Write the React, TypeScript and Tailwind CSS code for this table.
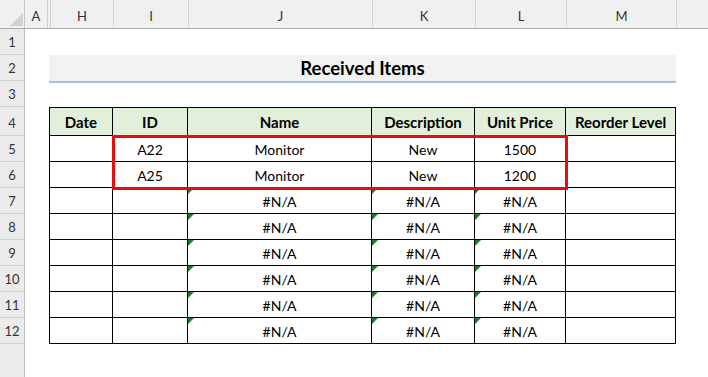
import React from "react";

const rowHeights = [26, 26, 26, 29, 26, 26, 26, 26, 26, 26, 26, 26];

const headerCols: { label: string; w: string }[] = [
  { label: "H", w: "w-[63px]" },
  { label: "I", w: "w-[75px]" },
  { label: "J", w: "w-[184px]" },
  { label: "K", w: "w-[103px]" },
  { label: "L", w: "w-[91px]" },
  { label: "M", w: "w-[110px]" },
];

const tableHead = ["Date", "ID", "Name", "Description", "Unit Price", "Reorder Level"];

type Row = { cells: string[]; tri: boolean };
const rows: Row[] = [
  { cells: ["", "A22", "Monitor", "New", "1500", ""], tri: false },
  { cells: ["", "A25", "Monitor", "New", "1200", ""], tri: false },
  ...Array.from({ length: 6 }, () => ({ cells: ["", "", "#N/A", "#N/A", "#N/A", ""], tri: true })),
];

function Tri() {
  return (
    <span className="absolute left-0 top-0 w-0 h-0 border-t-[6px] border-t-[#1e7a2e] border-r-[6px] border-r-transparent" />
  );
}

export default function App() {
  return (
    <div
      className="w-[708px] h-[377px] overflow-hidden bg-white flex flex-col text-black"
      style={{ fontFamily: "Lato, 'Liberation Sans', sans-serif" }}
    >
      {/* column header */}
      <div className="h-[29px] shrink-0 flex bg-[#f0f0f0] border-b border-[#ababab] text-[13px] text-[#333]">
        <div className="w-[25px] relative border-r border-[#c6c6c6]">
          <svg className="absolute left-0 top-0" width="25" height="28" viewBox="0 0 25 28">
            <polygon points="10,26 23,26 23,13" fill="#d2d2d2" />
          </svg>
        </div>
        <div className="w-[23px] border-r border-[#d0d0d0] flex items-end justify-center pb-[2px]">A</div>
        <div className="w-[3px] border-r border-[#d0d0d0]" />
        {headerCols.map((c) => (
          <div key={c.label} className={`${c.w} border-r border-[#d6d6d6] flex items-end justify-center pb-[2px]`}>
            {c.label}
          </div>
        ))}
        <div className="flex-1" />
      </div>

      <div className="flex flex-1 min-h-0">
        {/* row headers */}
        <div className="w-[25px] shrink-0 bg-[#ebebeb] border-r border-[#bdbdbd] flex flex-col text-[13px] text-[#333]">
          {rowHeights.map((h, i) => (
            <div
              key={i}
              className="border-b border-[#d2d2d2] flex items-end justify-center pb-[2px]"
              style={{ height: h }}
            >
              {i + 1}
            </div>
          ))}
        </div>

        {/* sheet body */}
        <div className="flex-1 flex flex-col pl-[24px]">
          <div className="h-[26px] shrink-0" />
          <div className="h-[26px] shrink-0 w-[627px]">
            <div className="h-[28px] bg-[#f2f2f2] border-b-[2px] border-[#a9bcdf] flex items-center justify-center font-bold text-[18.5px] leading-none pt-[1px]">
              Received Items
            </div>
          </div>
          <div className="h-[26px] shrink-0" />

          <div className="relative w-[627px]">
            <div className="grid grid-cols-[63px_75px_184px_103px_91px_110px] border-l border-t border-black text-[14px]">
              {tableHead.map((t) => (
                <div
                  key={t}
                  className="h-[28px] bg-[#e2efda] border-r border-b border-black flex items-center justify-center font-bold text-[15px] pt-[1px]"
                >
                  {t}
                </div>
              ))}
              {rows.map((r, ri) =>
                r.cells.map((c, ci) => (
                  <div
                    key={`${ri}-${ci}`}
                    className="relative h-[26px] border-r border-b border-black flex items-center justify-center pt-[2px]"
                  >
                    {r.tri && ci >= 2 && ci <= 4 && <Tri />}
                    {c}
                  </div>
                ))
              )}
            </div>
            <div className="absolute left-[63px] top-[28px] w-[456px] h-[55px] border-[3px] border-[#e30f0f] pointer-events-none" />
          </div>
        </div>
      </div>
    </div>
  );
}
